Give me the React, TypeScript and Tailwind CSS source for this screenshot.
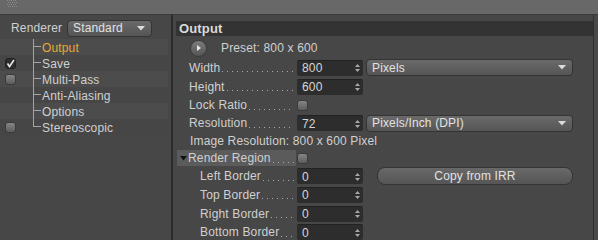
import React from "react";

const treeItems = [
  { label: "Output", check: "none", active: true },
  { label: "Save", check: "checked" },
  { label: "Multi-Pass", check: "box" },
  { label: "Anti-Aliasing", check: "none" },
  { label: "Options", check: "none" },
  { label: "Stereoscopic", check: "box" },
];

function CheckBox() {
  return (
    <div className="w-[11px] h-[11px] rounded-[3px] border border-[#3a3a3a] bg-gradient-to-b from-[#858585] to-[#5c5c5c]" />
  );
}

function CheckedBox() {
  return (
    <div className="w-[11px] h-[11px] rounded-[3px] border border-[#222] bg-[#2e2e2e] flex items-center justify-center">
      <svg width="9" height="9" viewBox="0 0 9 9">
        <path d="M1.5 4.5 L3.5 7.5 L8 1" stroke="#e6e6e6" strokeWidth="1.6" fill="none" />
      </svg>
    </div>
  );
}

function Spinner() {
  return (
    <svg width="5" height="10" viewBox="0 0 5 10" className="shrink-0">
      <path d="M2.5 1 L5 4 L0 4 Z" fill="#a8a8a8" />
      <path d="M0 6 L5 6 L2.5 9 Z" fill="#a8a8a8" />
    </svg>
  );
}

function NumField({ value }: { value: string }) {
  return (
    <div className="w-[66px] h-[16px] rounded-[2px] bg-[#2d2d2d] border-t border-[#222] flex items-center justify-between pl-[5px] pr-[3px] text-[#d6d6d6]">
      <span>{value}</span>
      <Spinner />
    </div>
  );
}

function Dropdown({ value, width }: { value: string; width: string }) {
  return (
    <div
      className={`${width} h-[17px] rounded-[4px] border border-[#343434] bg-gradient-to-b from-[#6a6a6a] to-[#555555] flex items-center justify-between pl-[5px] pr-[6px] text-[#e2e2e2]`}
    >
      <span>{value}</span>
      <svg width="8" height="5" viewBox="0 0 8 5">
        <path d="M0 0 L8 0 L4 4.5 Z" fill="#dcdcdc" />
      </svg>
    </div>
  );
}

// dotted leader between a label and its field
function Dots() {
  return (
    <div className="flex-1 h-[1px] mt-[8px] ml-[2px] bg-[linear-gradient(to_right,#a8a8a8_1px,transparent_1px)] bg-[length:5px_1px] bg-repeat-x" />
  );
}

function Label({ text, indent = false }: { text: string; indent?: boolean }) {
  return (
    <div className={`w-[121px] flex items-center pr-[3px] ${indent ? "pl-[24px]" : "pl-[13px]"}`}>
      <span className="whitespace-nowrap">{text}</span>
      <Dots />
    </div>
  );
}

export default function App() {
  return (
    <div className="w-[598px] h-[240px] overflow-hidden bg-[#474747] font-['Liberation_Sans',sans-serif] text-[12px] tracking-[0.15px] text-[#d0d0d0] leading-none">
      {/* title strip */}
      <div className="h-[15px] bg-[#686868] border-b border-[#3b3b3b] pl-[7px]">
        <svg width="10" height="8" viewBox="0 0 10 8">
          {[0, 2, 4, 6, 8].map((x) =>
            [0, 2, 4, 6].map((y) => (
              <rect key={`${x}-${y}`} x={x + (y % 4 === 0 ? 0 : 1)} y={y} width="1" height="1" fill="#8a8a8a" />
            ))
          )}
        </svg>
      </div>

      <div className="flex h-[225px]">
        {/* left tree */}
        <div className="w-[171px] pt-[5px]">
          <div className="flex items-center h-[16px] pl-[11px]">
            <span className="w-[56px]">Renderer</span>
            <Dropdown value="Standard" width="w-[85px]" />
          </div>
          <div className="mt-[3px] w-[168px]">
            {treeItems.map((item, i) => (
              <div
                key={item.label}
                className={`flex h-[16px] items-stretch ${i % 2 === 0 ? "bg-[#4c4c4c]" : "bg-[#464646]"}`}
              >
                <div className="w-[33px] flex items-center pl-[5px]">
                  {item.check === "box" && <CheckBox />}
                  {item.check === "checked" && <CheckedBox />}
                </div>
                <div className="w-[8px] flex flex-col">
                  <div className="h-[8px] border-l border-b border-[#a4a4a4]" />
                  <div className={`flex-1 ${i < treeItems.length - 1 ? "border-l border-[#a4a4a4]" : ""}`} />
                </div>
                <div
                  className={`flex items-center pl-[1px] pt-[1px] ${item.active ? "text-[#e6a935]" : "text-[#d0d0d0]"}`}
                >
                  {item.label}
                </div>
              </div>
            ))}
          </div>
        </div>

        <div className="w-[2px] bg-[#2c2c2c]" />

        {/* right attributes */}
        <div className="w-[420px] pl-[3px] pt-[6px]">
          <div className="h-[15px] bg-[#333333] pl-[3px] flex items-center font-bold text-[13px] text-[#dadada]">
            Output
          </div>

          <div className="mt-[2px]">
            <div className="h-[20px] flex items-center pl-[14px]">
              <div className="w-[17px] h-[17px] rounded-full border border-[#3a3a3a] bg-gradient-to-b from-[#7c7c7c] to-[#555] flex items-center justify-center">
                <svg width="4" height="6" viewBox="0 0 4 6">
                  <path d="M0 0 L4 3 L0 6 Z" fill="#e8e8e8" />
                </svg>
              </div>
              <span className="ml-[14px]">Preset: 800 x 600</span>
            </div>

            <div className="h-[19px] flex items-center">
              <Label text="Width" />
              <NumField value="800" />
              <div className="ml-[3px]">
                <Dropdown value="Pixels" width="w-[207px]" />
              </div>
            </div>

            <div className="h-[19px] flex items-center">
              <Label text="Height" />
              <NumField value="600" />
            </div>

            <div className="h-[18px] flex items-center">
              <Label text="Lock Ratio" />
              <CheckBox />
            </div>

            <div className="h-[18px] flex items-center">
              <Label text="Resolution" />
              <NumField value="72" />
              <div className="ml-[3px]">
                <Dropdown value="Pixels/Inch (DPI)" width="w-[207px]" />
              </div>
            </div>

            <div className="h-[17px] flex items-center pl-[14px]">
              Image Resolution: 800 x 600 Pixel
            </div>

            <div className="h-[18px] flex items-center">
              <div className="w-[121px] pl-[1px] pr-[1px] h-[16px]">
                <div className="h-full bg-[#5b5b5b] flex items-center pl-[3px] pr-[2px]">
                  <svg width="7" height="5" viewBox="0 0 7 5" className="shrink-0">
                    <path d="M0 0 L7 0 L3.5 4.5 Z" fill="#111" />
                  </svg>
                  <span className="ml-[1px] whitespace-nowrap">Render Region</span>
                  <Dots />
                </div>
              </div>
              <CheckBox />
            </div>

            <div className="h-[18px] flex items-center">
              <Label text="Left Border" indent />
              <NumField value="0" />
              <div className="ml-[14px] w-[196px] h-[18px] rounded-[8px] border border-[#343434] bg-gradient-to-b from-[#696969] to-[#555555] flex items-center justify-center text-[#e2e2e2]">
                Copy from IRR
              </div>
            </div>

            <div className="h-[19px] flex items-center">
              <Label text="Top Border" indent />
              <NumField value="0" />
            </div>

            <div className="h-[19px] flex items-center">
              <Label text="Right Border" indent />
              <NumField value="0" />
            </div>

            <div className="h-[18px] flex items-center">
              <Label text="Bottom Border" indent />
              <NumField value="0" />
            </div>
          </div>
        </div>

        <div className="w-[1px] bg-[#2f2f2f]" />
        <div className="flex-1 bg-[#494949]" />
      </div>
    </div>
  );
}
